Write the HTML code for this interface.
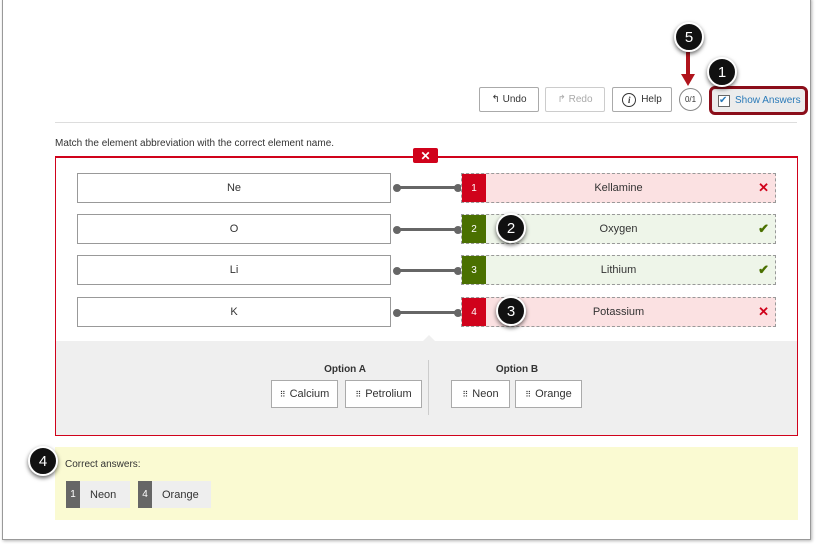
<!DOCTYPE html>
<html><head><style>
body{margin:0;width:816px;height:544px;background:#fff;font-family:"Liberation Sans",Arial,sans-serif;position:relative;overflow:hidden;color:#333}
.a{position:absolute;box-sizing:border-box}
.frame{left:2px;top:-2px;width:809px;height:542px;border:1px solid #999;box-shadow:1px 1px 3px rgba(0,0,0,.3)}
.btn{border:1px solid #aaa;background:#fff;font-size:10px;display:flex;align-items:center;justify-content:center;gap:5px;border-radius:2px}
.l{left:77px;width:314px;height:30px;border:1px solid #999;background:#fff;font-size:11px;display:flex;align-items:center;justify-content:center}
.r{left:461px;width:315px;height:30px;border:1px dashed #999;font-size:11px;display:flex;align-items:center;justify-content:center}
.num{position:absolute;left:0;top:0;bottom:0;width:24px;color:#fff;font-size:10px;display:flex;align-items:center;justify-content:center}
.mk{position:absolute;right:6px;font-size:13px;font-weight:bold}
.line{left:397px;width:60px;height:3px;background:#666}
.dot{width:8px;height:8px;border-radius:50%;background:#666}
.opt{height:28px;border:1px solid #aaa;background:#fff;font-size:11px;display:flex;align-items:center;justify-content:center}
.opt:before{content:"⠿";font-size:8px;margin-right:4px}
.c{width:30px;height:30px;border-radius:50%;background:#111;border:2px solid #fff;box-shadow:0 2px 4px rgba(0,0,0,.6);color:#fff;font-size:15px;display:flex;align-items:center;justify-content:center}
.ca{height:27px;background:#eee;font-size:11px;display:flex;align-items:center}
.ca b{font-weight:normal;background:#666;color:#fff;width:14px;height:100%;display:flex;align-items:center;justify-content:center;font-size:10px;margin-right:10px}
</style></head><body>
<div class="a frame"></div>
<div class="a btn" style="left:479px;top:87px;width:60px;height:25px">↰ Undo</div>
<div class="a btn" style="left:545px;top:87px;width:60px;height:25px;color:#aaa;border-color:#ccc">↱ Redo</div>
<div class="a btn" style="left:612px;top:87px;width:60px;height:25px"><span style="border:1.5px solid #333;border-radius:50%;width:12px;height:12px;font-size:9px;font-style:italic;font-weight:bold;display:inline-flex;align-items:center;justify-content:center;font-family:'Liberation Serif'">i</span>Help</div>
<div class="a" style="left:679px;top:88px;width:23px;height:23px;border:1px solid #888;border-radius:50%;font-size:8px;display:flex;align-items:center;justify-content:center">0/1</div>
<div class="a" style="left:709px;top:86px;width:99px;height:29px;border:3px solid #8b0e1a;border-radius:6px;background:#ececec;font-size:10px;color:#2a7ab8;display:flex;align-items:center;padding-left:6px"><span style="width:10px;height:10px;border:1px solid #666;background:#fff;color:#2a7ab8;font-size:10px;line-height:9px;margin-right:5px">✔</span>Show Answers</div>
<div class="a" style="left:686px;top:52px;width:4px;height:24px;background:#b0141c"></div>
<div class="a" style="left:681px;top:74px;border-left:7px solid transparent;border-right:7px solid transparent;border-top:12px solid #b0141c;width:0"></div>
<div class="a" style="left:55px;top:122px;width:742px;height:1px;background:#ddd"></div>
<div class="a" style="left:55px;top:138px;font-size:10px">Match the element abbreviation with the correct element name.</div>
<div class="a" style="left:55px;top:156px;width:743px;height:280px;border:1px solid #d0021b;border-top:2px solid #d0021b"></div>
<div class="a" style="left:413px;top:148px;width:25px;height:15px;background:#d0021b;color:#fff;font-size:12px;font-weight:bold;display:flex;align-items:center;justify-content:center;border-radius:2px">✕</div>
<div class="a" style="left:56px;top:341px;width:741px;height:94px;background:#efefef"></div>
<div class="a" style="left:422px;top:335px;border-left:7px solid transparent;border-right:7px solid transparent;border-bottom:7px solid #efefef;width:0"></div>

<div class="a l" style="top:173px">Ne</div>
<div class="a l" style="top:214px">O</div>
<div class="a l" style="top:255px">Li</div>
<div class="a l" style="top:297px">K</div>
<div class="a line" style="top:186px"></div><div class="a dot" style="left:393px;top:184px"></div><div class="a dot" style="left:454px;top:184px"></div>
<div class="a line" style="top:228px"></div><div class="a dot" style="left:393px;top:226px"></div><div class="a dot" style="left:454px;top:226px"></div>
<div class="a line" style="top:269px"></div><div class="a dot" style="left:393px;top:267px"></div><div class="a dot" style="left:454px;top:267px"></div>
<div class="a line" style="top:311px"></div><div class="a dot" style="left:393px;top:309px"></div><div class="a dot" style="left:454px;top:309px"></div>
<div class="a r" style="top:173px;background:#fbe1e2"><div class="num" style="background:#d0021b">1</div>Kellamine<span class="mk" style="color:#d0021b">✕</span></div>
<div class="a r" style="top:214px;background:#eef5e9"><div class="num" style="background:#4a7000">2</div>Oxygen<span class="mk" style="color:#4a7000">✔</span></div>
<div class="a r" style="top:255px;background:#eef5e9"><div class="num" style="background:#4a7000">3</div>Lithium<span class="mk" style="color:#4a7000">✔</span></div>
<div class="a r" style="top:297px;background:#fbe1e2"><div class="num" style="background:#d0021b">4</div>Potassium<span class="mk" style="color:#d0021b">✕</span></div>

<div class="a" style="left:300px;top:364px;width:90px;text-align:center;font-size:10px;font-weight:bold">Option A</div>
<div class="a" style="left:472px;top:364px;width:90px;text-align:center;font-size:10px;font-weight:bold">Option B</div>
<div class="a" style="left:428px;top:360px;width:1px;height:55px;background:#ccc"></div>
<div class="a opt" style="left:271px;top:380px;width:67px">Calcium</div>
<div class="a opt" style="left:345px;top:380px;width:77px">Petrolium</div>
<div class="a opt" style="left:451px;top:380px;width:59px">Neon</div>
<div class="a opt" style="left:515px;top:380px;width:67px">Orange</div>

<div class="a" style="left:55px;top:447px;width:743px;height:73px;background:#fafad2"></div>
<div class="a" style="left:65px;top:459px;font-size:10px">Correct answers:</div>
<div class="a ca" style="left:66px;top:481px;width:64px"><b>1</b>Neon</div>
<div class="a ca" style="left:138px;top:481px;width:73px"><b>4</b>Orange</div>

<div class="a c" style="left:674px;top:22px">5</div>
<div class="a c" style="left:707px;top:57px">1</div>
<div class="a c" style="left:496px;top:213px">2</div>
<div class="a c" style="left:496px;top:296px">3</div>
<div class="a c" style="left:28px;top:446px">4</div>
</body></html>
